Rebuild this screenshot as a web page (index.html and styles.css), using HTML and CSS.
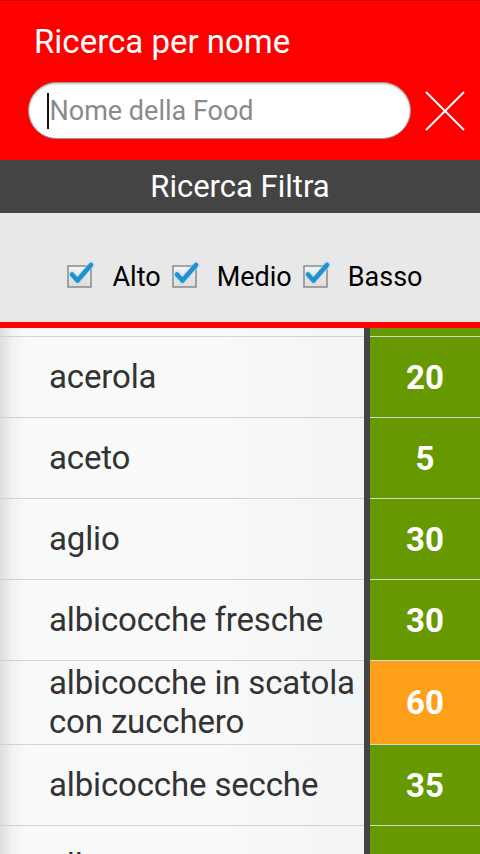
FILE: index.html
```html
<!DOCTYPE html>
<html lang="it">
<head>
<meta charset="utf-8">
<title>Ricerca per nome</title>
<link rel="stylesheet" href="styles.css">
</head>
<body>
<div class="app">
  <header class="header">
    <div class="title">Ricerca per nome</div>
    <div class="search-row">
      <div class="search-box"><span class="caret"></span><span class="placeholder">Nome della Food</span></div>
      <svg class="clear-icon" width="40" height="40" viewBox="0 0 40 40"><path d="M1 1 L39 39 M39 1 L1 39" stroke="#fff" stroke-width="2" fill="none"/></svg>
    </div>
  </header>
  <div class="filter-bar">Ricerca Filtra</div>
  <div class="filters">
    <label class="check"><svg class="cb" width="28" height="28" viewBox="0 0 28 28"><defs><linearGradient id="cbg" x1="0" y1="0" x2="0" y2="1"><stop offset="0" stop-color="#f4f4f4"/><stop offset="1" stop-color="#dcdcdc"/></linearGradient></defs><rect x="1" y="6" width="23" height="21" fill="url(#cbg)" stroke="#8a8a8a" stroke-width="1.5"/><path d="M5 14.5 L10.5 20.5 L24 5" stroke="#9fd3ee" stroke-width="7" fill="none" stroke-linecap="round" stroke-linejoin="round" opacity="0.5"/><path d="M5 14.5 L10.5 20.5 L24 5" stroke="#1f93cf" stroke-width="4.5" fill="none" stroke-linecap="round" stroke-linejoin="round"/></svg><span>Alto</span></label>
    <label class="check"><svg class="cb" width="28" height="28" viewBox="0 0 28 28"><rect x="1" y="6" width="23" height="21" fill="url(#cbg)" stroke="#8a8a8a" stroke-width="1.5"/><path d="M5 14.5 L10.5 20.5 L24 5" stroke="#9fd3ee" stroke-width="7" fill="none" stroke-linecap="round" stroke-linejoin="round" opacity="0.5"/><path d="M5 14.5 L10.5 20.5 L24 5" stroke="#1f93cf" stroke-width="4.5" fill="none" stroke-linecap="round" stroke-linejoin="round"/></svg><span>Medio</span></label>
    <label class="check"><svg class="cb" width="28" height="28" viewBox="0 0 28 28"><rect x="1" y="6" width="23" height="21" fill="url(#cbg)" stroke="#8a8a8a" stroke-width="1.5"/><path d="M5 14.5 L10.5 20.5 L24 5" stroke="#9fd3ee" stroke-width="7" fill="none" stroke-linecap="round" stroke-linejoin="round" opacity="0.5"/><path d="M5 14.5 L10.5 20.5 L24 5" stroke="#1f93cf" stroke-width="4.5" fill="none" stroke-linecap="round" stroke-linejoin="round"/></svg><span>Basso</span></label>
  </div>
  <div class="red-line"></div>
  <div class="list">
    <div class="row partial"><div class="name"></div><div class="div"></div><div class="value green"></div></div>
    <div class="row"><div class="name">acerola</div><div class="div"></div><div class="value green">20</div></div>
    <div class="row"><div class="name">aceto</div><div class="div"></div><div class="value green">5</div></div>
    <div class="row"><div class="name">aglio</div><div class="div"></div><div class="value green">30</div></div>
    <div class="row"><div class="name">albicocche fresche</div><div class="div"></div><div class="value green">30</div></div>
    <div class="row"><div class="name">albicocche in scatola con zucchero</div><div class="div"></div><div class="value orange">60</div></div>
    <div class="row"><div class="name">albicocche secche</div><div class="div"></div><div class="value green">35</div></div>
    <div class="row"><div class="name">alloro</div><div class="div"></div><div class="value green">5</div></div>
  </div>
</div>
</body>
</html>
```

FILE: styles.css
```css
* { box-sizing: border-box; }
html, body { margin: 0; padding: 0; }
body {
  width: 480px;
  height: 854px;
  overflow: hidden;
  font-family: Roboto, "Noto Sans", sans-serif;
  background: #f4f5f5;
}
.app { width: 480px; height: 854px; overflow: hidden; display: flex; flex-direction: column; }

.header {
  background: #ff0000;
  border-top: 1px solid #c80000;
  height: 160px;
  padding: 21px 0 0 34px;
  flex-shrink: 0;
}
.title {
  color: #fff;
  font-size: 33px;
  line-height: 39px;
}
.search-row {
  display: flex;
  align-items: center;
  margin-top: 21px;
  margin-left: -6px;
}
.search-box {
  width: 383px;
  height: 57px;
  border-radius: 29px;
  background: #fff;
  border: 1.5px solid #9a9a9a;
  box-shadow: inset 0 1px 2px rgba(0,0,0,0.25);
  display: flex;
  align-items: center;
  padding-left: 18px;
}
.caret {
  width: 1.5px;
  height: 36px;
  background: #111;
  margin-right: 1px;
}
.placeholder {
  color: #8a8a8a;
  font-size: 27px;
}
.clear-icon { margin-left: 14px; }

.filter-bar {
  background: #444444;
  height: 53px;
  flex-shrink: 0;
  color: #fff;
  font-size: 31px;
  display: flex;
  align-items: center;
  justify-content: center;
}
.filters {
  background: #e8e8e8;
  height: 109px;
  flex-shrink: 0;
  display: flex;
  align-items: center;
  justify-content: center;
  gap: 11px;
  padding: 18px 0 0 10px;
}
.check {
  display: flex;
  align-items: center;
  font-size: 27px;
  color: #000;
}
.cb { margin-right: 17px; margin-top: -6px; }

.red-line { height: 6px; background: #ff0000; flex-shrink: 0; }

.list { flex: 1; overflow: hidden; }
.row {
  display: flex;
  min-height: 81px;
}
.row.partial { min-height: 9px; height: 9px; }
.name {
  flex: 1;
  border-bottom: 1px solid #d2d2d2;
  background: linear-gradient(90deg, #dedede 0, #f2f2f2 12px, #f8f9f9 26px, #f9f9f9 60%, #f3f4f5 100%);
  color: #333;
  font-size: 33px;
  line-height: 39px;
  letter-spacing: -0.15px;
  padding: 2px 0 3px 49px;
  display: flex;
  align-items: center;
}
.div { width: 6px; background: #444444; }
.value {
  width: 110px;
  border-bottom: 1px solid #d6d6d6;
  color: #fff;
  font-weight: bold;
  font-size: 33px;
  display: flex;
  align-items: center;
  justify-content: center;
}
.green { background: #669900; }
.orange { background: #ffa01a; }
```
